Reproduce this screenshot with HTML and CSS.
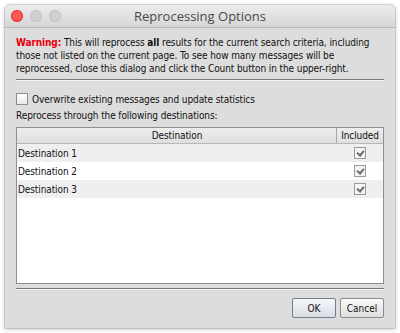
FILE: index.html
```html
<!DOCTYPE html>
<html lang="en">
<head>
    <meta charset="UTF-8">
    <title>Reprocessing Options</title>
    <link rel="stylesheet" href="styles.css">
</head>
<body>
    <div class="window">
        <div class="titlebar">
            <div class="lights">
                <span class="light close"></span>
                <span class="light"></span>
                <span class="light"></span>
            </div>
            <div class="title">Reprocessing Options</div>
        </div>

        <div class="content">
            <p class="warning"><span class="warn-label">Warning:</span> This will reprocess <b>all</b> results for the current search criteria, including those not listed on the current page. To see how many messages will be reprocessed, close this dialog and click the Count button in the upper-right.</p>
            <div class="separator"></div>

            <label class="check-row">
                <span class="box"></span>
                Overwrite existing messages and update statistics
            </label>
            <p class="caption">Reprocess through the following destinations:</p>

            <div class="table">
                <div class="row head">
                    <div class="cell name">Destination</div>
                    <div class="cell inc">Included</div>
                </div>
                <div class="row odd">
                    <div class="cell name">Destination 1</div>
                    <div class="cell inc"><span class="tick"></span></div>
                </div>
                <div class="row">
                    <div class="cell name">Destination 2</div>
                    <div class="cell inc"><span class="tick"></span></div>
                </div>
                <div class="row odd">
                    <div class="cell name">Destination 3</div>
                    <div class="cell inc"><span class="tick"></span></div>
                </div>
            </div>
            <div class="separator bottom"></div>

            <div class="buttons">
                <button class="default">OK</button>
                <button>Cancel</button>
            </div>
        </div>
    </div>
</body>
</html>
```

FILE: styles.css
```css
body {
    margin: 0;
    background: #ffffff;
    font-family: 'DejaVu Sans Condensed', 'Liberation Sans', sans-serif;
    font-size: 10px;
    letter-spacing: -0.1px;
    color: #111;
}
.window {
    margin: 5px;
    width: 390px;
    height: 323px;
    background: #dddddd;
    border-radius: 5px 5px 0 0;
    box-shadow: 0 0 0 1px rgba(0, 0, 0, 0.12), 0 1px 5px rgba(0, 0, 0, 0.25);
    display: flex;
    flex-direction: column;
}
.titlebar {
    height: 22px;
    display: flex;
    align-items: center;
    position: relative;
    background: linear-gradient(#ececec, #d6d6d6);
    border-bottom: 1px solid #b9b9b9;
    border-radius: 5px 5px 0 0;
}
.lights {
    display: flex;
    gap: 7px;
    padding-left: 6px;
}
.light {
    width: 12px;
    height: 12px;
    border-radius: 50%;
    background: #d0d0d0;
    box-shadow: inset 0 0 0 1px #c2c2c2;
}
.light.close {
    background: #fc5753;
    box-shadow: inset 0 0 0 1px #df3d39;
}
.title {
    position: absolute;
    left: 0;
    right: 0;
    text-align: center;
    font-family: 'Open Sans', 'Liberation Sans', sans-serif;
    font-size: 13px;
    letter-spacing: 0;
    color: #4a4a4a;
}
.content {
    flex: 1;
    padding: 8px 11px 0 11px;
    display: flex;
    flex-direction: column;
}
.warning {
    margin: 0;
    line-height: 13px;
}
.warn-label {
    color: #e8000b;
    font-weight: bold;
}
.separator {
    height: 1px;
    background: #7a7a7a;
    border-bottom: 1px solid #f2f2f2;
    margin-top: 4px;
}
.check-row {
    display: flex;
    align-items: center;
    gap: 4px;
    margin-top: 12px;
    height: 12px;
}
.box {
    width: 10px;
    height: 10px;
    border: 1px solid #8e8e8e;
    background: linear-gradient(#ffffff, #e9e9e9);
}
.caption {
    margin: 5px 0 0 0;
    line-height: 12px;
}
.table {
    margin-top: 5px;
    height: 155px;
    background: #ffffff;
    border: 1px solid #8f8f8f;
}
.row {
    display: flex;
    height: 18px;
    align-items: center;
}
.row.odd {
    background: #efefef;
}
.row.head {
    height: 15px;
    background: linear-gradient(#ededed, #dfdfdf);
    border-bottom: 1px solid #b8b8b8;
}
.cell.name {
    flex: 1;
    padding-left: 1px;
}
.head .cell.name {
    text-align: center;
    border-right: 1px solid #a8a8a8;
    height: 15px;
    line-height: 15px;
}
.cell.inc {
    width: 46px;
    text-align: center;
    display: flex;
    justify-content: center;
}
.tick {
    width: 10px;
    height: 10px;
    border: 1px solid #9a9a9a;
    background: #f4f4f4;
    position: relative;
}
.tick::after {
    content: '';
    position: absolute;
    left: 3px;
    top: 1px;
    width: 3px;
    height: 5px;
    border-right: 2px solid #6a6a6a;
    border-bottom: 2px solid #6a6a6a;
    transform: rotate(40deg);
}
.separator.bottom {
    margin-top: 4px;
}
.buttons {
    display: flex;
    justify-content: flex-end;
    gap: 4px;
    margin-top: 8px;
}
button {
    font-family: 'DejaVu Sans Condensed', 'Liberation Sans', sans-serif;
    font-size: 10px;
    width: 44px;
    height: 20px;
    padding: 0;
    border: 1px solid #8c8c8c;
    border-radius: 2px;
    background: linear-gradient(#fbfbfb, #dedede);
    color: #111;
}
button.default {
    border-color: #6d7f90;
    background: linear-gradient(#f6f8fa, #d8dde2);
}
```
